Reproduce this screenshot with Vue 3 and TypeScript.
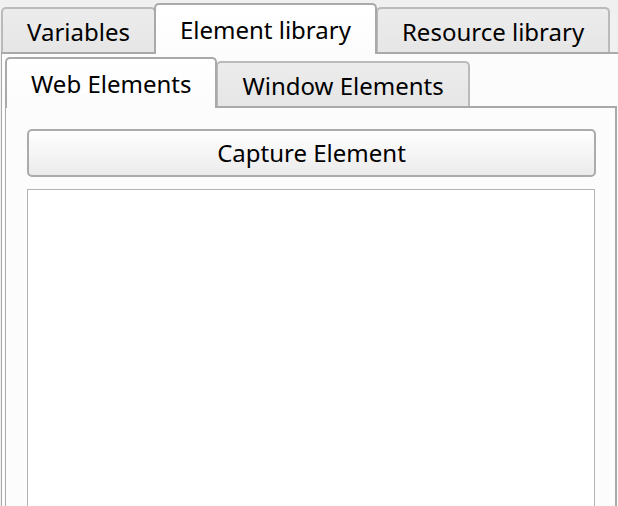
<script setup lang="ts">
import { ref } from 'vue'

const mainTabs: string[] = ['Variables', 'Element library', 'Resource library']
const elementTabs: string[] = ['Web Elements', 'Window Elements']

const activeMain = ref(1)
const activeElement = ref(0)
</script>

<template>
  <main class="window">
    <div class="tabs" role="tablist" aria-label="Libraries">
      <button
        v-for="(label, i) in mainTabs"
        :key="label"
        type="button"
        role="tab"
        class="tab"
        :class="{ active: activeMain === i }"
        :aria-selected="activeMain === i"
        @click="activeMain = i"
      >{{ label }}</button>
    </div>
    <section class="pane outer" role="tabpanel" :aria-label="mainTabs[activeMain]">
      <template v-if="activeMain === 1">
        <div class="tabs" role="tablist" aria-label="Elements">
          <button
            v-for="(label, i) in elementTabs"
            :key="label"
            type="button"
            role="tab"
            class="tab"
            :class="{ active: activeElement === i }"
            :aria-selected="activeElement === i"
            @click="activeElement = i"
          >{{ label }}</button>
        </div>
        <section class="pane inner" role="tabpanel" :aria-label="elementTabs[activeElement]">
          <button type="button" class="capture">Capture Element</button>
          <div class="list"></div>
        </section>
      </template>
    </section>
  </main>
</template>

<style>
body {
  margin: 0;
  background: #f0f0f0;
}
</style>

<style scoped>
.window {
  box-sizing: border-box;
  display: flex;
  flex-direction: column;
  height: 100vh;
  padding: 3px 0 0 1px;
  overflow: hidden;
  font-family: "Segoe UI", "Noto Sans", "Open Sans", sans-serif;
  font-size: 24px;
  line-height: 32px;
  color: #000;
}

button {
  margin: 0;
  font: inherit;
  color: inherit;
}

.tabs {
  display: flex;
  align-items: flex-end;
  flex: none;
}

.tab {
  box-sizing: border-box;
  height: 45px;
  padding: 2px 24px 0;
  border: 2px solid #bababa;
  border-bottom: 0;
  border-radius: 5px 5px 0 0;
  background: linear-gradient(#ececec, #e6e6e6);
  white-space: nowrap;
}

.tab + .tab {
  margin-left: -1px;
}

.tab.active {
  position: relative;
  z-index: 1;
  height: 51px;
  margin-bottom: -2px;
  padding-bottom: 2px;
  border-color: #a9a9a9;
  background: linear-gradient(#fff, #fcfcfc);
}

.tab.active:not(:first-child) {
  margin-left: -2px;
}

.pane {
  box-sizing: border-box;
  display: flex;
  flex-direction: column;
  flex: 1;
  min-height: 0;
  border: 0 solid #a9a9a9;
  border-top-width: 2px;
  border-left-width: 1px;
  background: #fcfcfc;
}

.outer {
  padding: 3px 1px 0 3px;
}

.inner {
  padding: 21px 19px 0 21px;
  border-right-width: 2px;
}

.capture {
  box-sizing: border-box;
  flex: none;
  height: 48px;
  padding: 0;
  border: 2px solid #ababab;
  border-radius: 5px;
  background: linear-gradient(#fff, #ebebeb);
}

.list {
  flex: 1;
  margin: 12px 1px 0 0;
  border: 1px solid #b4b4b4;
  border-bottom: 0;
  background: #fff;
}
</style>
